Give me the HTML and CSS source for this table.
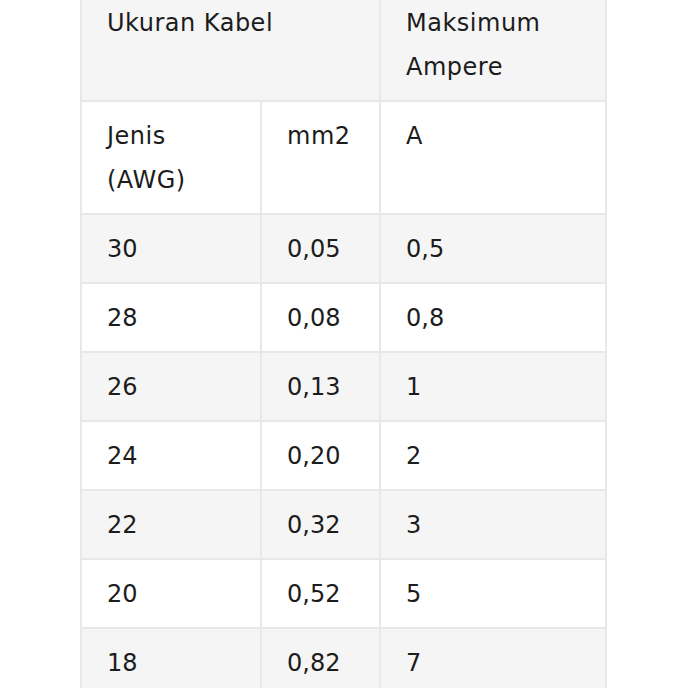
FILE: index.html
```html
<!DOCTYPE html>
<html lang="id">
<head>
<meta charset="utf-8">
<title>Ukuran Kabel</title>
<link rel="stylesheet" href="styles.css">
</head>
<body>
<div class="wrap">
<table class="cable">
  <colgroup>
    <col class="c1"><col class="c2"><col class="c3">
  </colgroup>
  <tr class="shade head">
    <td colspan="2">Ukuran Kabel</td>
    <td>Maksimum<br>Ampere</td>
  </tr>
  <tr class="plain head">
    <td>Jenis<br>(AWG)</td>
    <td>mm2</td>
    <td>A</td>
  </tr>
  <tr class="shade"><td>30</td><td>0,05</td><td>0,5</td></tr>
  <tr class="plain"><td>28</td><td>0,08</td><td>0,8</td></tr>
  <tr class="shade"><td>26</td><td>0,13</td><td>1</td></tr>
  <tr class="plain"><td>24</td><td>0,20</td><td>2</td></tr>
  <tr class="shade"><td>22</td><td>0,32</td><td>3</td></tr>
  <tr class="plain"><td>20</td><td>0,52</td><td>5</td></tr>
  <tr class="shade"><td>18</td><td>0,82</td><td>7</td></tr>
</table>
</div>
</body>
</html>
```
FILE: styles.css
```css
html, body {
  margin: 0;
  padding: 0;
  background: #ffffff;
}
body {
  width: 688px;
  height: 688px;
  overflow: hidden;
  font-family: "DejaVu Sans", "Open Sans", sans-serif;
  color: #1c1c1c;
}
.wrap {
  padding: 0 0 0 80px;
  margin-top: -13px;
}
.cable {
  border-collapse: collapse;
  table-layout: fixed;
  width: 525px;
  font-size: 24px;
  line-height: 44px;
  letter-spacing: 0;
}
.c1 { width: 180px; }
.c2 { width: 119px; }
.c3 { width: 226px; }
.cable td {
  border: 2px solid #e8e8e8;
  padding: 12px 20px 11px 25px;
  vertical-align: top;
  text-align: left;
}
.head td { letter-spacing: 0.5px; }
.shade td { background: #f5f5f5; }
.plain td { background: #ffffff; }
```
